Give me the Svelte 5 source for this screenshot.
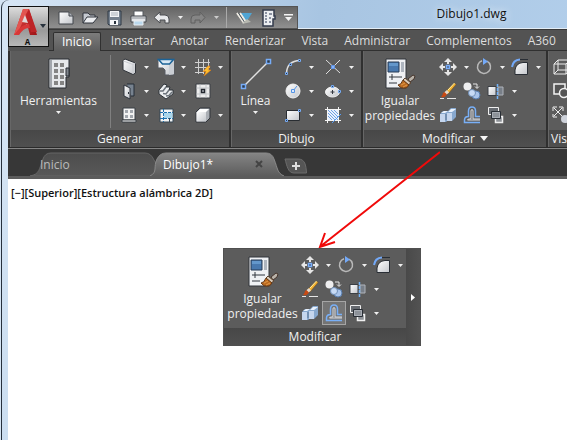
<script lang="ts">
	type Tool = { icon: string; label: string; menu?: boolean; active?: boolean };

	const ribbonTabs = ['Inicio', 'Insertar', 'Anotar', 'Renderizar', 'Vista', 'Administrar', 'Complementos', 'A360'];

	const quickTools = [
		{ icon: 'new', label: 'Nuevo' },
		{ icon: 'open', label: 'Abrir' },
		{ icon: 'save', label: 'Guardar' },
		{ icon: 'print', label: 'Trazar' },
		{ icon: 'undo', label: 'Deshacer' }
	];

	const buildTools: Tool[] = [
		{ icon: 'wall', label: 'Muro', menu: true },
		{ icon: 'roof', label: 'Cubierta', menu: true },
		{ icon: 'grid', label: 'Rejilla', menu: true },
		{ icon: 'door', label: 'Puerta', menu: true },
		{ icon: 'stairs', label: 'Escalera', menu: true },
		{ icon: 'column', label: 'Techo' },
		{ icon: 'window', label: 'Ventana', menu: true },
		{ icon: 'space', label: 'Espacio', menu: true },
		{ icon: 'box', label: 'Prisma', menu: true }
	];

	const drawTools: Tool[] = [
		{ icon: 'arc', label: 'Arco', menu: true },
		{ icon: 'point', label: 'Intersección', menu: true },
		{ icon: 'circle', label: 'Círculo', menu: true },
		{ icon: 'ellipse', label: 'Elipse', menu: true },
		{ icon: 'rect', label: 'Rectángulo', menu: true },
		{ icon: 'hatch', label: 'Sombreado', menu: true }
	];

	const modifyRows: Tool[][] = [
		[
			{ icon: 'move', label: 'Desplazar', menu: true },
			{ icon: 'rotate', label: 'Girar', menu: true },
			{ icon: 'fillet', label: 'Empalme', menu: true }
		],
		[
			{ icon: 'erase', label: 'Borrar' },
			{ icon: 'copy', label: 'Copiar' },
			{ icon: 'mirror', label: 'Simetría', menu: true }
		],
		[
			{ icon: 'stretch', label: 'Estirar' },
			{ icon: 'offset', label: 'Desfase' },
			{ icon: 'order', label: 'Orden', menu: true }
		]
	];
</script>

<svelte:head>
	<title>Dibujo1.dwg</title>
</svelte:head>

<svg class="defs" width="0" height="0" aria-hidden="true">
	<defs>
		<linearGradient id="metal" x1="0" y1="0" x2="1" y2="1">
			<stop offset="0" stop-color="#ffffff" />
			<stop offset="1" stop-color="#c3c6cb" />
		</linearGradient>
		<linearGradient id="red" x1="0" y1="0" x2="1" y2="1">
			<stop offset="0" stop-color="#e64a45" />
			<stop offset="1" stop-color="#9e1216" />
		</linearGradient>
		<linearGradient id="tab-off" x1="0" y1="0" x2="0" y2="1">
			<stop offset="0" stop-color="#4d4d4d" />
			<stop offset="1" stop-color="#585858" />
		</linearGradient>
		<linearGradient id="tab-on" x1="0" y1="0" x2="0" y2="1">
			<stop offset="0" stop-color="#858585" />
			<stop offset="1" stop-color="#5c5c5c" />
		</linearGradient>
	</defs>
</svg>

{#snippet glyph(name: string)}
	<svg class="glyph" viewBox="0 0 18 18" aria-hidden="true">
		{#if name === 'new'}
			<path d="M2 3H12L16 7V15H2Z" fill="url(#metal)" stroke="#43474d" />
			<path d="M12 3V7H16" fill="#aeb2b8" stroke="#43474d" />
		{:else if name === 'open'}
			<path d="M2 14V4H7L9 6H14V8" fill="#c5c9d0" stroke="#30353d" />
			<path d="M2 14L6 8H17L12 14Z" fill="#eceef1" stroke="#30353d" />
		{:else if name === 'save'}
			<path d="M3 2H16V16H4L3 15Z" fill="#75818f" stroke="#2f3945" />
			<path d="M5 2H14V8H5Z" fill="#f2f4f6" />
			<path d="M6 4H13M6 6H13" stroke="#a9b1ba" />
			<path d="M5 11H13V16H5Z" fill="#f5f6f8" />
			<path d="M9 12H11V15H9Z" fill="#29323d" />
		{:else if name === 'print'}
			<path d="M5 2H14V8H5Z" fill="#fff" stroke="#55595f" />
			<path d="M2 7H17V13H2Z" fill="#e3e5e8" stroke="#43474d" />
			<path d="M3 9H16" stroke="#8b8f95" />
			<path d="M5 12H14V16H5Z" fill="#b9d7ec" stroke="#e8edf2" />
		{:else if name === 'undo'}
			<path d="M7 3V6H12Q16 6 16 10V14H12V11H7V14L1 8.500Z" fill="#e8e9eb" stroke="#4a4c50" />
		{:else if name === 'redo'}
			<path d="M11 3V6H6Q2 6 2 10V14H6V11H11V14L16 8.500Z" fill="#858585" stroke="#606060" />
		{:else if name === 'workspace'}
			<path d="M5 4H17L12 12H8Z" fill="#50a5d4" />
			<path d="M2 4L9 14M5 4L11 13" stroke="#efece4" stroke-width="2" />
			<path d="M3.500 4L10 14" stroke="#4b555d" />
			<path d="M7 15L16 13L12 10Z" fill="#b6b8b0" />
		{:else if name === 'sheet'}
			<path d="M4 1H15V7H16V10H14V17H4Z" fill="#eceef1" stroke="#333b4c" stroke-width="1.500" />
			<path d="M6 4H8M6 7H8M6 10H8M6 13H8M10 5H13M10 9H12M10 13H12" stroke="#697386" stroke-width="1.500" />
		{:else if name === 'wall'}
			<path d="M3 2.500L5 1L15.500 5V15L13 16.500L3 12Z" fill="url(#metal)" stroke="#30343a" />
			<path d="M3.500 3L13 6.500V16M13 6.500L15.500 5" fill="none" stroke="#c8cbd0" />
		{:else if name === 'roof'}
			<path d="M1 1H17V17H8V12L6 10H1Z" fill="url(#metal)" stroke="#565b62" />
			<path d="M12 6V17L17 16V1Z" fill="#c9cdd3" />
			<path d="M1.500 1.500H16.500L12.500 6H5.500Z" fill="#d8e8f4" stroke="#1c6397" stroke-width="1.500" />
		{:else if name === 'grid'}
			<path d="M4.500 1V16M9.500 1V16M14.500 1V12M1 4.500H16M1 9.500H16M1 14.500H10" stroke="#d0d0d0" />
			<path d="M14 8L9 13.500H12L10 18L17 12H14L16 8Z" fill="#ffc12e" stroke="#e07a11" stroke-width=".6" />
		{:else if name === 'door'}
			<path d="M7 2H14V14H11" fill="#77828f" stroke="#242c36" />
			<path d="M4 3L10 6V17L4 14Z" fill="url(#metal)" stroke="#2c333c" />
			<path d="M8.500 10V12" stroke="#2c333c" />
		{:else if name === 'stairs'}
			<path d="M2 8L7 2L10 3L9 5L13 5L12 8L16 8V12L9 17L2 12Z" fill="#eceef0" stroke="#2f343a" />
			<path d="M3 9L6 9L9 5M6 11.500L9 12L12 8M9 14L12 13.500L15 10" fill="none" stroke="#6c737b" stroke-width="1.500" />
		{:else if name === 'column'}
			<path d="M2 2H16V16H2Z" fill="#ededed" stroke="#3b3f45" />
			<path d="M2.500 6H15.500M2.500 12H15.500M6 2.500V15.500M12 2.500V15.500" stroke="#c3c6ca" />
			<path d="M7.500 7.500H10.500V10.500H7.500Z" fill="#c9ced5" stroke="#23282f" stroke-width="1.500" />
		{:else if name === 'window'}
			<path d="M3 2H15V14H3Z" fill="#f3f3f3" stroke="#393e45" />
			<path d="M5 4H8V7H5ZM10 4H13V7H10ZM5 9H8V12H5ZM10 9H13V12H10Z" fill="#a2a7ad" />
			<path d="M2 14H16V16H2Z" fill="#fff" stroke="#393e45" />
		{:else if name === 'space'}
			<path d="M3 3H16V16H3Z" fill="#f2f4f5" stroke="#344654" />
			<path d="M7 7H15.500V12H7Z" fill="#a9d6ec" />
			<path d="M6.500 3V16M3 6.500H16M3 12.500H16" stroke="#1b6fae" stroke-dasharray="3 1" />
			<path d="M12.500 12V16" stroke="#344654" />
		{:else if name === 'box'}
			<path d="M2 6L6 2H16V12L12 16H2Z" fill="#aaaeb4" stroke="#30343a" />
			<path d="M2.500 6H12V15.500H2.500Z" fill="url(#metal)" />
			<path d="M3 6L6 3H15L12 6Z" fill="#fff" />
		{:else if name === 'arc'}
			<path d="M2.500 15Q3 3 16 2.500" fill="none" stroke="#dedede" stroke-width="1.500" />
			<path d="M1.500 14.500H3.500V16.500H1.500ZM5.500 5.500H7.500V7.500H5.500ZM14.500 1.500H16.500V3.500H14.500Z" fill="#303642" stroke="#77acf5" />
		{:else if name === 'point'}
			<path d="M2 2L16 15M16 2L2 16" stroke="#dedede" />
			<path d="M7.500 7.500H10.500V10.500H7.500Z" fill="#87b5fa" stroke="#5d91e4" />
		{:else if name === 'circle'}
			<circle cx="9" cy="9" r="7" fill="url(#metal)" stroke="#f2f2f2" />
			<path d="M9 9L13 4" stroke="#5594e4" />
			<path d="M7.500 7.500H10.500V10.500H7.500Z" fill="#d8e8ff" stroke="#5594e4" />
		{:else if name === 'ellipse'}
			<ellipse cx="8.500" cy="10" rx="7" ry="5" fill="url(#metal)" stroke="#f2f2f2" />
			<path d="M8.500 8V12M6.500 10H10.500" stroke="#343941" />
			<path d="M7.500 3.500H9.500V5.500H7.500ZM14.500 8.500H16.500V10.500H14.500Z" fill="#33435b" stroke="#77acf5" />
		{:else if name === 'rect'}
			<path d="M2.500 4.500H15.500V14.500H2.500Z" fill="url(#metal)" stroke="#292d32" />
			<path d="M1.500 13.500H3.500V15.500H1.500ZM14.500 3.500H16.500V5.500H14.500Z" fill="#303b4b" stroke="#77acf5" />
		{:else if name === 'hatch'}
			<path d="M4 4H14V14H4Z" fill="#e9f1fd" />
			<path d="M4 7L11 14M4 4L14 14M7 4L14 11M4 10L8 14M10 4L14 8" stroke="#6f9fe2" />
			<path d="M3.500 1V17M14.500 1V17M1 3.500H17M1 14.500H17" stroke="#f5f5f5" />
			<path d="M8 17L17 8" stroke="#559cf5" />
		{:else if name === 'move'}
			<path d="M9 0L13 4H10V6H8V4H5ZM9 18L13 14H10V12H8V14H5ZM0 9L4 5V8H6V10H4V13ZM18 9L14 5V8H12V10H14V13Z" fill="#e6e6e6" />
			<path d="M7.500 7.500H10.500V10.500H7.500Z" fill="#42536c" stroke="#79adf8" stroke-width="1.500" />
		{:else if name === 'rotate'}
			<path d="M7 2.800A6.500 6.500 0 1 0 12 3.200" fill="none" stroke="#b9b9b9" stroke-width="1.500" />
			<path d="M8 0L13 3.500L8 7Z" fill="#73a9f8" />
		{:else if name === 'fillet'}
			<path d="M4 16.500V12Q5 5 12 4.500H16.500V16.500Z" fill="url(#metal)" stroke="#292e35" />
			<path d="M1 9Q2 2 9 1.500" fill="none" stroke="#73a9f8" stroke-width="2" />
			<path d="M9 1.500H17" stroke="#292e35" />
		{:else if name === 'erase'}
			<path d="M15.500 1L17 2.500L9 12L6 10Z" fill="#f4b333" stroke="#77511c" stroke-width=".6" />
			<path d="M15.500 1L9 8" stroke="#fff2a8" />
			<path d="M8 8L10 10.500L7 13L5 10.500Z" fill="#e4d9cb" />
			<path d="M5.500 10L8 12.500Q6 16 2 15Q4 13 4 11Z" fill="#c84a14" />
			<path d="M1 16.500H5M8 16.500H17" stroke="#e6e6e6" />
		{:else if name === 'copy'}
			<circle cx="4.500" cy="4.500" r="4" fill="#eeeeef" />
			<path d="M10 2H14V6M12 4.500L14 6.500L16 4.500" fill="none" stroke="#e6e6e6" />
			<circle cx="13" cy="13" r="4" fill="#a9c4ea" stroke="#587eae" />
			<circle cx="9" cy="11" r="3.500" fill="#c8dbf5" stroke="#6f8fb8" />
		{:else if name === 'mirror'}
			<path d="M1 4.500H9V13.500H1Z" fill="url(#metal)" stroke="#3a3e44" />
			<path d="M11 5H16V13H11Z" fill="#787f88" stroke="#aeb3ba" />
			<path d="M10.500 2V17" stroke="#72b4fb" stroke-dasharray="3 1" stroke-width="1.500" />
		{:else if name === 'stretch'}
			<path d="M1 8L4 5H9L12 2H17V11L13 15H8L7 16H1Z" fill="#87a8cf" />
			<path d="M1 8H6V16H1ZM8 7H13V15H8Z" fill="#c5d6ee" />
			<path d="M2 7L5 5H9L6 7ZM9 6L12 3H17L13 6Z" fill="#eaf2fd" />
			<path d="M7 8V14" stroke="#5f7693" />
		{:else if name === 'offset'}
			<path d="M17 16.500H1.500V14Q1.500 10.500 5.500 10.500V5Q5.500 1 9 1Q12.500 1 12.500 5V10.500H17" fill="none" stroke="#78aff7" stroke-width="1.500" />
			<path d="M17 14H4.500Q4 13 8 12.800V5Q8 3.500 9 3.500Q10 3.500 10 5V13H17" fill="none" stroke="#d9dce2" />
		{:else if name === 'order'}
			<path d="M1.500 1.500H11.500V8.500H1.500Z" fill="#666a70" stroke="#efefef" />
			<path d="M8.500 10.500H15.500V16.500H8.500Z" fill="#8d9196" stroke="#efefef" stroke-width="1.500" />
			<path d="M4.500 5.500H13.500V12.500H4.500Z" fill="#8d9299" stroke="#292e35" />
			<path d="M5.500 6.500H12.500V11.500H5.500Z" fill="none" stroke="#a8adb4" />
		{:else if name === 'cube'}
			<path d="M2 6L6 2H18V13L14 16H2ZM2 6H14V16M14 6L18 2M6 2V12H18M6 12L2 16" fill="none" stroke="#ededed" />
		{:else if name === 'shapes'}
			<path d="M2 2H13V12H2Z" fill="#555" stroke="#f2f2f2" stroke-width="1.500" />
			<circle cx="12" cy="11" r="4.500" fill="#555" stroke="#f2f2f2" stroke-width="1.500" />
		{:else if name === 'explode'}
			<path d="M2 2L10 10M10 2L2 10M1 5V1H5M7 1H11V5M1 8V11H5" fill="none" stroke="#ededed" />
			<circle cx="13" cy="13" r="4" fill="#ced2da" />
		{/if}
	</svg>
{/snippet}

{#snippet caret()}
	<svg class="caret" viewBox="0 0 5 3" aria-hidden="true"><path d="M0 0H5L2.500 3Z" fill="#f0f0f0" /></svg>
{/snippet}

{#snippet tool(item: Tool)}
	<span class="tool">
		<button class="tool__main" class:active={item.active} aria-label={item.label}>{@render glyph(item.icon)}</button>
		{#if item.menu}
			<button class="tool__menu" aria-label={`${item.label}: más`}>{@render caret()}</button>
		{/if}
	</span>
{/snippet}

{#snippet modifyTools(selected: string)}
	<div class="panel__body">
		<button class="big big--match">
			<svg class="big__icon" viewBox="0 0 32 32" aria-hidden="true">
				<path d="M2 1H22V30H2Z" fill="#eff1f4" stroke="#30343a" />
				<path d="M4 4H15V14H4Z" fill="#4878ae" stroke="#263b55" />
				<path d="M5 5H14V8H5Z" fill="#6397cb" />
				<path d="M17 4H20V14H17Z" fill="#aeb5bf" />
				<path d="M5 19H18M8 16V22M5 25H13" stroke="#31363e" />
				<path d="M24 21L29 17L31 18L30 21L26 24Z" fill="#b8b2a9" stroke="#46352c" />
				<path d="M21 20L27 25L24 27L19 22Z" fill="#d9cbb9" stroke="#59422f" />
				<path d="M19 22L25 27Q23 31 20 30Q17 31 14 27Q17 27 19 22Z" fill="#bc6b20" stroke="#633817" />
				<path d="M17 27L21 25M19 29L23 27" stroke="#e1994a" />
			</svg>
			<span>Igualar<br />propiedades</span>
		</button>
		<div class="rows">
			{#each modifyRows as row}
				<div class="row">
					{#each row as item}
						{@render tool({ ...item, active: item.icon === selected })}
					{/each}
				</div>
			{/each}
		</div>
	</div>
{/snippet}

<div class="window">
	<header class="header">
		<button class="app-button" aria-label="Menú de la aplicación">
			<svg viewBox="0 0 39 39" aria-hidden="true">
				<path d="M5 28L14 2H20L28 28H21L18 17L12 21L10 28Z" fill="url(#red)" />
				<path d="M14 2H20L17 7L8 28H5Z" fill="#e25550" />
				<path d="M17 8L22 25H28L20 2Z" fill="#bd2427" />
				<path d="M9 23Q14 17 20 17L21 21Q15 20 10 28H5Z" fill="#d83737" />
				<path d="M13 15L16 8L19 16Z" fill="#ded9d8" />
				<path d="M31 17H37L34 21Z" fill="#28323d" />
			</svg>
			<span>A</span>
		</button>
		<div class="title-row">
			<div class="quick">
				{#each quickTools as item}
					<button aria-label={item.label}>{@render glyph(item.icon)}</button>
				{/each}
				<button class="quick__caret" aria-label="Historial">{@render caret()}</button>
				<button aria-label="Rehacer">{@render glyph('redo')}</button>
				<button class="quick__caret dim" aria-label="Rehacer varios">{@render caret()}</button>
				<i></i>
				<button aria-label="Espacio de trabajo">{@render glyph('workspace')}</button>
				<button aria-label="Planos">{@render glyph('sheet')}</button>
				<button class="quick__more" aria-label="Personalizar">
					<svg viewBox="0 0 9 8" aria-hidden="true"><path d="M0 0H9V1.500H0ZM1 3H8L4.500 7Z" fill="#f4f4f4" /></svg>
				</button>
			</div>
			<h1>Dibujo1.dwg</h1>
		</div>
		<nav class="tabs">
			{#each ribbonTabs as tab, i}
				<button class:selected={i === 0}>{tab}</button>
			{/each}
		</nav>
	</header>

	<div class="ribbon">
		<section class="panel panel--build">
			<div class="panel__body">
				<button class="big big--tools">
					<svg class="big__icon" viewBox="0 0 32 32" aria-hidden="true">
						<path d="M6 1H26V19H23V30H6Z" fill="#e6e8eb" stroke="#292d32" />
						<path d="M7 2H9V29H7Z" fill="#a2a6ac" />
						<path d="M23 10H26V18H23Z" fill="#80858c" stroke="#292d32" />
						<path d="M11 5H15V9H11ZM17 5H21V9H17ZM11 11H15V15H11ZM17 11H21V15H17ZM11 17H15V21H11ZM17 17H21V21H17ZM11 23H15V27H11ZM17 23H21V27H17Z" fill="#848484" />
					</svg>
					<span>Herramientas</span>
					{@render caret()}
				</button>
				<div class="tools tools--build">
					{#each buildTools as item}
						{@render tool(item)}
					{/each}
				</div>
			</div>
			<h2>Generar</h2>
		</section>

		<section class="panel panel--draw">
			<div class="panel__body">
				<button class="big big--line">
					<svg class="big__icon" viewBox="0 0 32 32" aria-hidden="true">
						<path d="M4 28L28 4" stroke="#e2e2e2" stroke-width="1.500" />
						<path d="M1.500 26.500H5.500V30.500H1.500ZM26.500 1.500H30.500V5.500H26.500Z" fill="#2e3b4d" stroke="#76acf8" stroke-width="1.500" />
					</svg>
					<span>Línea</span>
					{@render caret()}
				</button>
				<div class="tools tools--draw">
					{#each drawTools as item}
						{@render tool(item)}
					{/each}
				</div>
			</div>
			<h2>Dibujo</h2>
		</section>

		<section class="panel panel--modify">
			{@render modifyTools('')}
			<h2>
				Modificar
				<svg class="expand" viewBox="0 0 8 5" aria-hidden="true"><path d="M0 0H8L4 5Z" fill="#f5f5f5" /></svg>
			</h2>
		</section>

		<section class="panel panel--view">
			<div class="panel__body">
				<div class="tools tools--view">
					{@render tool({ icon: 'cube', label: 'Cubo' })}
					{@render tool({ icon: 'shapes', label: 'Formas' })}
					{@render tool({ icon: 'explode', label: 'Descomponer' })}
				</div>
			</div>
			<h2>Vis</h2>
		</section>
	</div>

	<nav class="files">
		<button class="file">
			<svg class="file__shape" viewBox="0 0 134 24" preserveAspectRatio="none" aria-hidden="true">
				<path d="M0 24C10 22 9 17 13 7Q15 1 21 1H115Q121 1 124 8L134 24Z" fill="url(#tab-off)" stroke="#666" />
			</svg>
			<span>Inicio</span>
		</button>
		<button class="file file--open">
			<svg class="file__shape" viewBox="0 0 134 24" preserveAspectRatio="none" aria-hidden="true">
				<path d="M0 24C8 20 3 15 7 7Q10 1 16 1H116Q122 1 124 7C128 17 127 21 134 24Z" fill="url(#tab-on)" />
				<path d="M0 24C8 20 3 15 7 7Q10 1 16 1H116Q122 1 124 7C128 17 127 21 134 24" fill="none" stroke="#8a8a8a" />
			</svg>
			<span>Dibujo1*</span>
			<svg class="file__close" viewBox="0 0 8 8" aria-hidden="true"><path d="M1 1L7 7M7 1L1 7" stroke="#444" stroke-width="2" /></svg>
		</button>
		<button class="add" aria-label="Nuevo dibujo">
			<svg viewBox="0 0 24 16" aria-hidden="true">
				<path d="M1 1H14C21 1 22 7 22.500 15H10C4 15 3 8 1 1Z" fill="#555" stroke="#6c6c6c" />
				<path d="M12 4V12M8 8H16" stroke="#ddd" stroke-width="2" />
			</svg>
		</button>
	</nav>

	<main class="canvas">
		<p>[−][Superior][Estructura alámbrica 2D]</p>
	</main>

	<svg class="pointer" viewBox="0 0 124 100" aria-hidden="true">
		<path d="M124 2L5 96M9 83L4 97L19 92" fill="none" stroke="#f00a0a" stroke-width="2" />
	</svg>

	<aside class="flyout">
		<div class="flyout__panel">
			{@render modifyTools('offset')}
			<h2>Modificar</h2>
		</div>
		<button class="flyout__more" aria-label="Expandir">
			<svg viewBox="0 0 4 7" aria-hidden="true"><path d="M0 0L4 3.500L0 7Z" fill="#fff" /></svg>
		</button>
	</aside>
</div>

<style>
	:global(body) {
		background: #d5e4f3;
	}

	.window,
	.window button {
		font-family: 'Open Sans', 'Noto Sans', sans-serif;
		font-size: 12px;
		line-height: 15px;
	}

	.window {
		position: relative;
		box-sizing: border-box;
		min-height: 100vh;
		margin-left: 1px;
		padding-left: 6px;
		overflow: hidden;
		display: flex;
		flex-direction: column;
		border-left: 1px solid #26303c;
		border-radius: 8px 0 0 0;
		background: linear-gradient(100deg, #d7e6f5, #a8c5e2 50%, #b4d0ec);
	}

	.defs {
		position: absolute;
	}

	button {
		display: flex;
		align-items: center;
		justify-content: center;
		margin: 0;
		padding: 0;
		border: 0;
		background: none;
		color: #f0f0f0;
		white-space: nowrap;
	}

	svg {
		display: block;
		flex: none;
	}

	h1,
	h2,
	p {
		margin: 0;
		font-size: 12px;
		font-weight: 400;
	}

	.glyph {
		width: 18px;
		height: 18px;
	}

	.caret {
		width: 5px;
		height: 3px;
	}

	/* title bar and ribbon tabs */
	.header {
		display: grid;
		grid-template-columns: 41px minmax(0, 1fr);
		grid-template-rows: 30px 21px;
		background: linear-gradient(transparent 28px, #e3edf6 28px 29px, #383838 29px 30px, #535353 30px);
	}

	.app-button {
		grid-row: 1 / 3;
		align-self: start;
		box-sizing: border-box;
		height: 41px;
		margin-top: 6px;
		position: relative;
		border: 1px solid #111;
		background: linear-gradient(#dcdcdc, #9a9a9a 60%, #b8b8b8);
	}

	.app-button svg {
		width: 39px;
		height: 39px;
	}

	.app-button span {
		position: absolute;
		left: 0;
		right: 2px;
		bottom: 0;
		color: #111;
		font-size: 8px;
		font-weight: 700;
		line-height: 9px;
		text-align: center;
	}

	.title-row {
		display: flex;
		align-items: flex-start;
	}

	.quick {
		display: flex;
		align-items: center;
		box-sizing: border-box;
		height: 23px;
		margin-top: 6px;
		padding: 0 1px 0 5px;
		border: 1px solid #555;
		border-left: 0;
		background: linear-gradient(#646464, #909090);
	}

	.quick button {
		width: 24px;
		height: 20px;
	}

	.quick .quick__caret {
		width: 12px;
	}

	.quick .dim {
		opacity: 0.7;
	}

	.quick .quick__more {
		width: 16px;
	}

	.quick__more svg {
		width: 9px;
		height: 8px;
	}

	.quick i {
		width: 1px;
		height: 21px;
		margin: 0 5px 0 4px;
		background: #aaa;
	}

	h1 {
		flex: 1;
		padding: 6px 0 0 78px;
		text-align: center;
		color: #111;
		text-shadow: 0 0 8px #fff;
	}

	.tabs {
		grid-column: 2;
		display: flex;
		align-items: stretch;
		padding-left: 4px;
		border-bottom: 1px solid #303030;
	}

	.tabs button {
		padding: 0 8px;
		color: #ddd;
	}

	.tabs .selected {
		margin: 2px 2px -1px 0;
		padding: 0 8px 1px;
		border: 1px solid #303030;
		border-bottom: 0;
		border-radius: 2px 2px 0 0;
		background: linear-gradient(#7c7c7c, #5d5d5d);
		color: #fff;
	}

	/* ribbon panels */
	.ribbon {
		display: flex;
		gap: 2px;
		padding-left: 2px;
		overflow: hidden;
		border-bottom: 1px solid #2b2b2b;
		background: #303030;
	}

	.panel {
		flex: none;
		box-sizing: border-box;
		border-left: 1px solid #676767;
		background: #5c5c5c;
	}

	.panel--build {
		width: 219px;
	}

	.panel--draw {
		width: 130px;
	}

	.panel--modify {
		width: 183px;
	}

	.panel--view {
		flex: 1;
		min-width: 0;
		overflow: hidden;
	}

	.panel--view h2 {
		padding-left: 2px;
		text-align: left;
		white-space: nowrap;
	}

	.panel__body {
		display: flex;
		align-items: flex-start;
		height: 75px;
		padding-top: 4px;
	}

	h2 {
		height: 17px;
		background: linear-gradient(#474747, #505050);
		color: #f2f2f2;
		line-height: 17px;
		text-align: center;
	}

	.expand {
		display: inline-block;
		width: 8px;
		height: 5px;
		margin: 0 0 2px 2px;
	}

	.big {
		flex-direction: column;
		padding-top: 3px;
	}

	.big__icon {
		width: 32px;
		height: 32px;
		margin-bottom: 3px;
	}

	.big .caret {
		margin-top: 3px;
	}

	.big--tools {
		box-sizing: border-box;
		width: 100px;
		padding-right: 4px;
		height: 73px;
		justify-content: flex-start;
		border-right: 1px solid #808080;
	}

	.big--line {
		width: 52px;
	}

	.big--match {
		width: 72px;
	}

	.tools {
		display: grid;
		grid-auto-rows: 24px;
	}

	.tools--build {
		grid-template-columns: repeat(3, 37px);
		padding-left: 7px;
	}

	.tools--draw {
		grid-template-columns: repeat(2, 40px);
		padding-left: 2px;
	}

	.tools--draw .tool__main {
		width: 24px;
	}

	.tools--view {
		padding-left: 1px;
	}

	.row {
		display: flex;
		height: 24px;
	}

	.tool {
		display: flex;
		align-items: center;
	}

	.tool__main {
		box-sizing: border-box;
		width: 22px;
		height: 22px;
	}

	.row .tool__main {
		width: 24px;
		height: 24px;
	}

	.tool__menu {
		width: 12px;
		height: 22px;
	}

	.tool__main.active {
		border: 1px solid #a5a5a5;
		background: #747474;
	}

	/* drawing tabs */
	.files {
		display: flex;
		align-items: flex-end;
		height: 24px;
		padding: 3px 0 0 22px;
		border-top: 1px solid #858585;
		border-bottom: 3px solid #5c5c5c;
		background: #373737;
	}

	.file {
		position: relative;
		width: 134px;
		height: 24px;
		padding-left: 10px;
		justify-content: flex-start;
		color: #bbb;
	}

	.file--open {
		margin-left: -14px;
		padding-left: 13px;
		color: #fff;
	}

	.file span {
		position: relative;
		flex: 1;
		text-align: left;
	}

	.file__shape {
		position: absolute;
		inset: 0;
		width: 100%;
		height: 100%;
	}

	.file__close {
		position: relative;
		width: 8px;
		height: 8px;
		margin-right: 21px;
	}

	.add {
		height: 20px;
	}

	.add svg {
		width: 24px;
		height: 16px;
	}

	.canvas {
		flex: 1;
		padding: 6px 3px;
		background: #fff;
	}

	.canvas p {
		color: #111;
		font-weight: 600;
		font-size: 11px;
	}

	.pointer {
		position: absolute;
		left: 314px;
		top: 150px;
		width: 124px;
		height: 100px;
	}

	/* expanded panel over the drawing area */
	.flyout {
		position: absolute;
		left: 221px;
		top: 248px;
		display: flex;
		border: 1px solid #505050;
		background: #5c5c5c;
	}

	.flyout__panel {
		width: 182px;
	}

	.flyout .panel__body {
		padding-left: 3px;
	}

	.flyout__more {
		width: 14px;
		background: linear-gradient(90deg, #494949, #525252);
	}

	.flyout__more svg {
		width: 4px;
		height: 7px;
	}
</style>
